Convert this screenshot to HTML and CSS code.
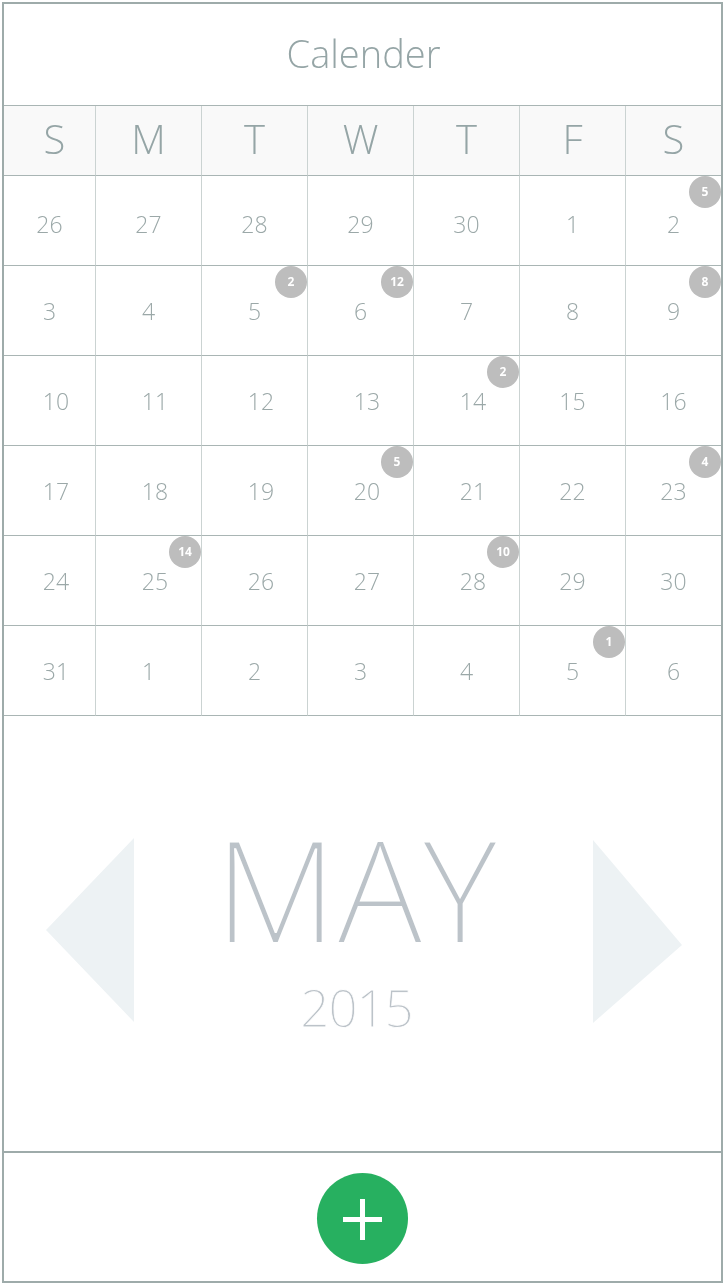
FILE: index.html
```html
<!DOCTYPE html>
<html lang="en">
<head>
<meta charset="utf-8">
<title>Calender</title>
<link rel="stylesheet" href="styles.css">
</head>
<body>
<div class="frame">
  <header class="title">Calender</header>
  <div class="cal">
    <div class="dow dow-first">S</div><div class="dow">M</div><div class="dow">T</div><div class="dow">W</div><div class="dow">T</div><div class="dow">F</div><div class="dow">S</div>

    <div class="day first">26</div><div class="day first">27</div><div class="day first">28</div><div class="day first">29</div><div class="day first">30</div><div class="day first">1</div><div class="day first">2<span class="badge">5</span></div>

    <div class="day">3</div><div class="day">4</div><div class="day">5<span class="badge">2</span></div><div class="day">6<span class="badge">12</span></div><div class="day">7</div><div class="day">8</div><div class="day">9<span class="badge">8</span></div>

    <div class="day wide">10</div><div class="day wide">11</div><div class="day wide">12</div><div class="day wide">13</div><div class="day wide">14<span class="badge">2</span></div><div class="day">15</div><div class="day">16</div>

    <div class="day wide">17</div><div class="day wide">18</div><div class="day wide">19</div><div class="day wide">20<span class="badge">5</span></div><div class="day wide">21</div><div class="day">22</div><div class="day">23<span class="badge">4</span></div>

    <div class="day wide">24</div><div class="day wide">25<span class="badge">14</span></div><div class="day wide">26</div><div class="day wide">27</div><div class="day wide">28<span class="badge">10</span></div><div class="day">29</div><div class="day">30</div>

    <div class="day wide">31</div><div class="day">1</div><div class="day">2</div><div class="day">3</div><div class="day">4</div><div class="day">5<span class="badge">1</span></div><div class="day">6</div>
  </div>

  <section class="month">
    <svg class="arrow arrow-left" width="88" height="184" viewBox="0 0 88 184" aria-hidden="true"><polygon points="88,0 0,92 88,184"/></svg>
    <div class="mid">
      <div class="mname">MAY</div>
      <div class="year">2015</div>
    </div>
    <svg class="arrow arrow-right" width="89" height="183" viewBox="0 0 89 183" aria-hidden="true"><polygon points="0,0 89,105 0,183"/></svg>
  </section>

  <footer class="foot">
    <button class="add" type="button" aria-label="Add">
      <svg width="40" height="41" viewBox="0 0 40 41" aria-hidden="true"><rect x="0" y="18" width="39" height="5"/><rect x="17" y="0" width="5" height="41"/></svg>
    </button>
  </footer>
</div>
</body>
</html>
```

FILE: styles.css
```css
* { box-sizing: border-box; }

html, body {
  margin: 0;
  padding: 0;
  background: #ffffff;
}

body {
  font-family: "Open Sans", "Liberation Sans", sans-serif;
  font-weight: 300;
  color: #95a5a6;
}

.frame {
  margin: 2px;
  width: 721px;
  height: 1281px;
  border: 2px solid #9eabaa;
  display: flex;
  flex-direction: column;
  background: #ffffff;
}

.title {
  height: 102px;
  flex: none;
  border-bottom: 1px solid #a9b5b4;
  display: flex;
  align-items: center;
  justify-content: center;
  font-size: 38px;
  font-weight: 300;
  color: #95a5a6;
  padding-bottom: 4px;
  padding-left: 2px;
  will-change: transform;
}

.cal {
  flex: none;
  display: grid;
  grid-template-columns: 92px repeat(5, 106px) 1fr;
  grid-template-rows: 70px repeat(6, 90px);
  will-change: transform;
}

.dow,
.day {
  border-right: 1px solid #cbd3d2;
  border-bottom: 1px solid #a9b5b4;
  display: flex;
  align-items: center;
  justify-content: center;
  position: relative;
}

.dow:nth-child(7n),
.day:nth-child(7n) {
  border-right: none;
}

.dow {
  background: #f9f9f9;
  font-size: 40px;
  font-weight: 300;
  color: #95a5a6;
  padding-bottom: 4px;
}

.dow-first {
  padding-left: 10px;
}

.day {
  font-size: 23px;
  font-weight: 300;
  color: #9ba8a8;
  padding-top: 1px;
}

.day.first {
  padding-top: 7px;
}

.day.wide {
  padding-left: 13px;
}

.badge {
  position: absolute;
  top: 0;
  right: 0;
  width: 32px;
  height: 32px;
  border-radius: 50%;
  background: #bdbdbd;
  color: #ffffff;
  font-size: 12px;
  font-weight: 700;
  display: flex;
  align-items: center;
  justify-content: center;
  line-height: 1;
}

.month {
  flex: 1;
  display: flex;
  align-items: flex-start;
  padding: 97px 39px 0 42px;
  will-change: transform;
}

.arrow {
  flex: none;
  fill: #edf2f4;
}

.arrow-left { margin-top: 25px; }
.arrow-right { margin-top: 27px; }

.mid {
  flex: 1;
  text-align: center;
  padding-right: 6px;
}

.mname {
  font-size: 142px;
  line-height: 140px;
  font-weight: 300;
  color: #bcc3c9;
  height: 140px;
  padding-top: 5px;
  padding-right: 9px;
  /* thins the regular cut towards the light weight of the reference */
  -webkit-text-stroke: 2px #ffffff;
}

.year {
  margin-top: 32px;
  font-size: 51px;
  line-height: 44px;
  font-weight: 300;
  color: #bcc3c9;
  padding-right: 8px;
  letter-spacing: -1px;
  -webkit-text-stroke: 0.8px #ffffff;
}

.foot {
  flex: none;
  height: 130px;
  border-top: 2px solid #9eabaa;
  display: flex;
  justify-content: center;
  align-items: flex-start;
  padding-top: 20px;
}

.add {
  width: 91px;
  height: 91px;
  border-radius: 50%;
  border: none;
  padding: 0;
  margin: 0;
  background: #27b060;
  display: flex;
  align-items: center;
  justify-content: center;
  cursor: pointer;
}

.add svg {
  fill: #ffffff;
  display: block;
  margin-top: 2px;
}
```
